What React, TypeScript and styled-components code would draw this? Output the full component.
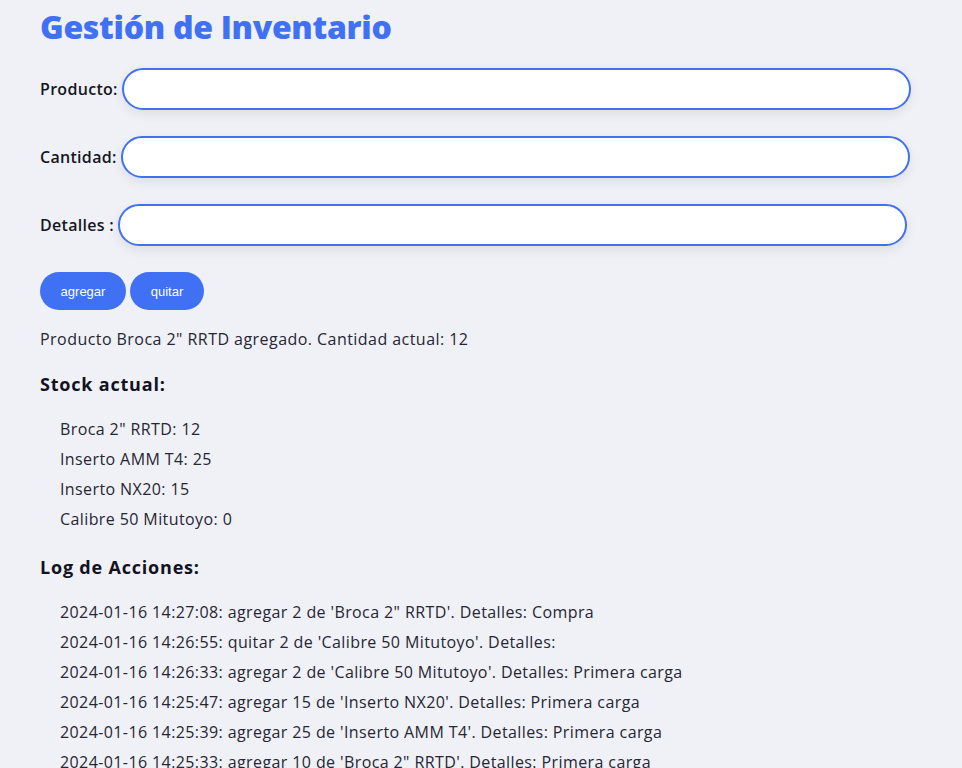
import React from "react";
import styled, { createGlobalStyle } from "styled-components";

const Global = createGlobalStyle`
  html, body { margin: 0; padding: 0; background: #f0f1f6; }
  body { font-family: "Open Sans", "Liberation Sans", sans-serif; color: #1c1c2b; }
`;

const Page = styled.div`
  padding: 3px 40px 0;
`;

const Title = styled.h1`
  margin: 0;
  font-size: 32px;
  line-height: 48px;
  font-weight: 800;
  letter-spacing: -0.3px;
  color: #4070f4;
`;

const Form = styled.form`
  display: flex;
  flex-direction: column;
  gap: 26px;
  margin-top: 17px;
`;

const Row = styled.div`
  display: flex;
  align-items: center;
  gap: 4px;
`;

const Label = styled.label`
  font-size: 16px;
  font-weight: 600;
  letter-spacing: 0.3px;
  color: #16161f;
`;

const Input = styled.input`
  width: 789px;
  height: 42px;
  box-sizing: border-box;
  border: 2px solid #4070f4;
  border-radius: 21px;
  background: #fff;
  box-shadow: 0 4px 12px rgba(0, 0, 0, 0.08);
  padding: 0 16px;
  outline: none;
`;

const Buttons = styled.div`
  display: flex;
  gap: 4px;
`;

const Button = styled.button<{ $w: number }>`
  width: ${(p) => p.$w}px;
  height: 38px;
  border: none;
  border-radius: 19px;
  background: #4070f4;
  color: #fff;
  font-family: "Liberation Sans", Arial, sans-serif;
  font-size: 13px;
  cursor: pointer;
`;

const Message = styled.p`
  margin: 17px 0 0;
  font-size: 16px;
  line-height: 24px;
  letter-spacing: 0.45px;
  color: #262634;
`;

const Heading = styled.h2`
  margin: 20px 0 0;
  font-size: 18px;
  line-height: 27px;
  font-weight: 700;
  letter-spacing: 0.8px;
  color: #121222;
`;

const List = styled.ul`
  list-style: none;
  margin: 16px 0 0;
  padding: 0 0 0 20px;
`;

const Item = styled.li`
  font-size: 16px;
  line-height: 30px;
  letter-spacing: 0.4px;
  color: #262634;
  white-space: nowrap;
`;

const stock = [
  'Broca 2" RRTD: 12',
  "Inserto AMM T4: 25",
  "Inserto NX20: 15",
  "Calibre 50 Mitutoyo: 0",
];

const log = [
  "2024-01-16 14:27:08: agregar 2 de 'Broca 2\" RRTD'. Detalles: Compra",
  "2024-01-16 14:26:55: quitar 2 de 'Calibre 50 Mitutoyo'. Detalles:",
  "2024-01-16 14:26:33: agregar 2 de 'Calibre 50 Mitutoyo'. Detalles: Primera carga",
  "2024-01-16 14:25:47: agregar 15 de 'Inserto NX20'. Detalles: Primera carga",
  "2024-01-16 14:25:39: agregar 25 de 'Inserto AMM T4'. Detalles: Primera carga",
  "2024-01-16 14:25:33: agregar 10 de 'Broca 2\" RRTD'. Detalles: Primera carga",
];

export default function App() {
  return (
    <>
      <Global />
      <Page>
        <Title>Gestión de Inventario</Title>
        <Form onSubmit={(e) => e.preventDefault()}>
          <Row>
            <Label htmlFor="producto">Producto:</Label>
            <Input id="producto" />
          </Row>
          <Row>
            <Label htmlFor="cantidad">Cantidad:</Label>
            <Input id="cantidad" />
          </Row>
          <Row>
            <Label htmlFor="detalles">Detalles :</Label>
            <Input id="detalles" />
          </Row>
          <Buttons>
            <Button type="button" $w={86}>agregar</Button>
            <Button type="button" $w={74}>quitar</Button>
          </Buttons>
        </Form>
        <Message>Producto Broca 2" RRTD agregado. Cantidad actual: 12</Message>
        <Heading>Stock actual:</Heading>
        <List>
          {stock.map((s) => (
            <Item key={s}>{s}</Item>
          ))}
        </List>
        <Heading>Log de Acciones:</Heading>
        <List>
          {log.map((s) => (
            <Item key={s}>{s}</Item>
          ))}
        </List>
      </Page>
    </>
  );
}
